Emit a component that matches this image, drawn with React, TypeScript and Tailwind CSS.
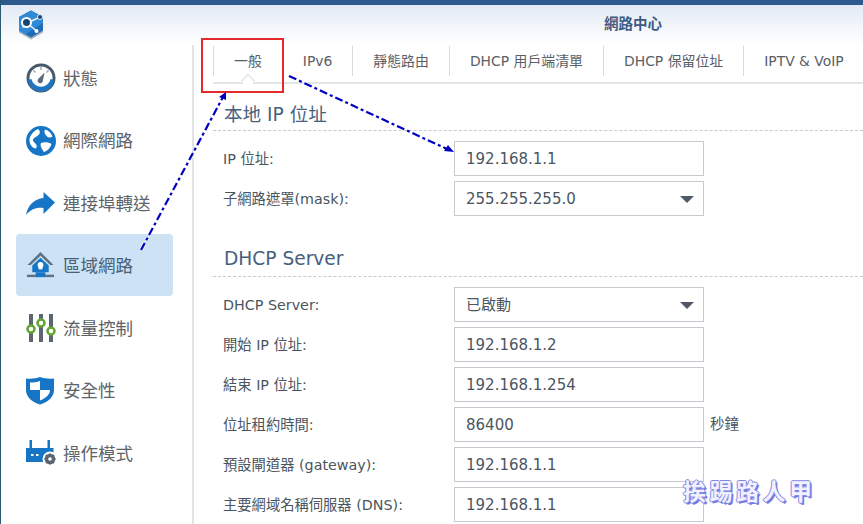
const font = "[font-family:'DejaVu_Sans','Noto_Sans_CJK_TC',sans-serif]";

function LogoIcon() {
  return (
    <svg width="30" height="30" viewBox="0 0 30 30">
      <path d="M15 2 27 8.500v14l-12 7-12-7v-14z" fill="#a9b2bb" />
      <path d="M15 0.500 27 7v13.500l-12 7-12-7V7z" fill="#1c6cb8" />
      <path d="M15 0.500 27 7v6L9 24.500l-6-4V7z" fill="#2f8ad6" />
      <circle cx="10.500" cy="12.500" r="4.500" fill="#16466f" stroke="#fff" strokeWidth="2" />
      <path d="M14.500 11.500 23 7.500M14 15.500l6.500 5.500M6.500 17.500l2-2" stroke="#e8f2fb" strokeWidth="1.500" />
      <circle cx="24" cy="7" r="2.500" fill="#16466f" stroke="#e8f2fb" />
      <circle cx="20.500" cy="21" r="2" fill="#fff" />
    </svg>
  );
}

function GaugeIcon() {
  return (
    <svg width="30" height="30" viewBox="0 0 30 30">
      <circle cx="15" cy="15" r="13" fill="#fff" stroke="#47596b" strokeWidth="3" />
      <path d="M1.800 17a13.300 13.300 0 0 0 26.400 0l-3.600-1a9.800 9.800 0 0 1-19.200 0z" fill="#1f75c0" />
      <path d="M18.500 9.500 16.800 18a2.600 2.600 0 1 1-4.400-2.200z" fill="#5d6b78" />
      <path d="M15 4v3M7.500 7.500l2 2M22.500 7.500l-2 2" stroke="#9aa5ae" strokeWidth="1.400" />
    </svg>
  );
}

function GlobeIcon() {
  return (
    <svg width="30" height="30" viewBox="0 0 30 30">
      <circle cx="15" cy="15" r="15" fill="#1675c4" />
      <path d="M12 3c2 1.500 2.500 3.500 1 5.500-2 2.500-5 2.500-6 5-.5 2 2.500 3.500 3.500 5.500.5 2 0 3.500-1.500 3.500C5 21 3 17 3.500 12.500 5 8 8 4.500 12 3z" fill="#fff" />
      <path d="M19 3.500c3 .5 6 3 7.500 7-1.500 1-4 1.500-5.500 0-1.500-1.500-3.500-4.500-2-7z" fill="#fff" />
      <path d="M15 17c3-1.500 8-1 10.500 1-1 3.500-4 7-7.500 8-1.500-2-4.500-6.500-3-9z" fill="#fff" />
    </svg>
  );
}

function ForwardIcon() {
  return (
    <svg width="29" height="23" viewBox="0 0 29 23">
      <path d="M17.500 0 29 10.500 17.500 22v-6C10 15 5 17.500 0 23 2 13 8 7 17.500 6z" fill="#1675c4" />
    </svg>
  );
}

function HouseIcon() {
  return (
    <svg width="29" height="29" viewBox="0 0 30 30">
      <path d="M15 1 1.500 14.500h3.500L15 5l10 9.500h3.500z" fill="#5d7286" />
      <path d="M15 7 6.500 15v7h17v-7z" fill="#1675c4" />
      <circle cx="15" cy="14.500" r="3" fill="#fff" />
      <rect x="13" y="15" width="4" height="4" fill="#fff" />
      <rect x="1" y="24.500" width="28" height="2.500" fill="#5d7286" />
      <rect x="10" y="22" width="10" height="5" fill="#1675c4" />
    </svg>
  );
}

function SlidersIcon() {
  return (
    <svg width="30" height="28" viewBox="0 0 30 28">
      <path d="M5 0v28M15 0v28M25 0v28" stroke="#5c6670" strokeWidth="4" />
      <circle cx="5" cy="15" r="3.500" fill="#fff" stroke="#5fa52e" strokeWidth="2.500" />
      <circle cx="15" cy="9" r="3.500" fill="#fff" stroke="#5fa52e" strokeWidth="2.500" />
      <circle cx="25" cy="17" r="3.500" fill="#fff" stroke="#5fa52e" strokeWidth="2.500" />
    </svg>
  );
}

function ShieldIcon() {
  return (
    <svg width="28" height="28" viewBox="0 0 28 28">
      <path d="M14 0c4 1.500 9 2 14 1.500V13c0 7-6 12-14 14.500C6 25 0 20 0 13V1.500C5 2 10 1.500 14 0z" fill="#1675c4" />
      <path d="M14 4c-3 1-6 1.500-10 1.500V13h10zM14 13v10.500c5-2 10-5.500 10-10.500z" fill="#fff" />
    </svg>
  );
}

function RouterIcon() {
  return (
    <svg width="31" height="26" viewBox="0 0 31 26">
      <path d="M0 8h27.500v14H0z" fill="#1675c4" />
      <path d="M3.500 0h2.500v10H3.500zM21.500 0H24v10h-2.500z" fill="#1675c4" />
      <path d="M5 14h2.500v2H5zM10 14h2.500v2H10z" fill="#fff" />
      <circle cx="24" cy="19" r="7.500" fill="#fff" />
      <circle cx="24" cy="19" r="3.800" fill="none" stroke="#5b6670" strokeWidth="3" />
      <path d="M24 13.500v11M18.500 19h11M20 15l8 8M28 15l-8 8" stroke="#5b6670" strokeWidth="2" />
      <circle cx="24" cy="19" r="1.800" fill="#fff" />
    </svg>
  );
}

const navItems = [
  { label: "狀態", icon: <GaugeIcon /> },
  { label: "網際網路", icon: <GlobeIcon /> },
  { label: "連接埠轉送", icon: <ForwardIcon /> },
  { label: "區域網路", icon: <HouseIcon />, active: true },
  { label: "流量控制", icon: <SlidersIcon /> },
  { label: "安全性", icon: <ShieldIcon /> },
  { label: "操作模式", icon: <RouterIcon /> },
];

const tabs = ["一般", "IPv6", "靜態路由", "DHCP 用戶端清單", "DHCP 保留位址", "IPTV & VoIP"];

function Row({ label, value, select, unit }: { label: string; value: string; select?: boolean; unit?: string }) {
  return (
    <div className="flex h-[35px] items-center">
      <span className="w-[241px] shrink-0 pt-[2px] pl-[10px] text-[14.300px] text-[#4a5560]">{label}</span>
      <div className="flex h-[35px] w-[250px] shrink-0 items-center justify-between border border-[#c6c9cd] pt-[2px] pr-[9px] pl-[11px] text-[15px] text-[#4a5560]">
        {value}
        {select && <span className="h-0 w-0 border-x-[7px] border-t-[7px] border-x-transparent border-t-[#4f5a66]" />}
      </div>
      {unit && <span className="ml-[6px] text-[14.500px] text-[#4a5560]">{unit}</span>}
    </div>
  );
}

function SectionTitle({ children, className }: { children: string; className: string }) {
  return (
    <h2 className={`flex items-center border-b border-dashed border-[#c8cbce] pl-[11px] text-[18.600px] font-normal text-[#47617c] ${className}`}>
      {children}
    </h2>
  );
}

export default function App() {
  return (
    <div className={`relative flex h-[524px] w-[863px] flex-col overflow-hidden border-l border-[#2b5a70] bg-white ${font}`}>
      <div className="h-[5px] shrink-0 bg-[#2c5a8e]" />
      <header className="flex h-[40px] shrink-0 items-center bg-gradient-to-b from-[#e3eaf4] to-white pl-[15px]">
        <LogoIcon />
        <span className="ml-[558px] text-[14.500px] font-bold text-[#3c5a84]">網路中心</span>
      </header>
      <div className="flex min-h-0 flex-1">
        <nav className="flex w-[191px] shrink-0 flex-col pt-[1px] pl-[15px]">
          {navItems.map((item) => (
            <div
              key={item.label}
              className={`flex h-[62.500px] w-[157px] shrink-0 items-center rounded-[4px] ${item.active ? "bg-[#cde3f5]" : ""}`}
            >
              <span className="flex w-[47px] shrink-0 pt-[2px] pl-[10px]">{item.icon}</span>
              <span className={`whitespace-nowrap pt-[3px] text-[17.500px] ${item.active ? "text-[#4a6078]" : "text-[#5d6368]"}`}>
                {item.label}
              </span>
            </div>
          ))}
        </nav>
        <main className="min-w-0 flex-1 border-l-2 border-[#e2e3e5] pt-[1px]">
          <div className="relative ml-[19px] flex h-[38px] border-b-2 border-[#e4e5e6] pb-[7px]">
            {tabs.map((tab) => (
              <div
                key={tab}
                className="flex h-[30px] shrink-0 items-center whitespace-nowrap border-l border-[#d9dadc] px-5 text-[13.900px] text-[#5a6066]"
              >
                {tab}
              </div>
            ))}
            <span className="absolute top-[30px] left-[30px] h-[10px] w-[10px] rotate-45 border-t border-l border-[#dcdddf] bg-white" />
          </div>
          <div className="mt-[16px] flex flex-col pl-[19px]">
            <SectionTitle className="h-[31px]">本地 IP 位址</SectionTitle>
            <div className="mt-[10px] flex flex-col gap-[5px]">
              <Row label="IP 位址:" value="192.168.1.1" />
              <Row label="子網路遮罩(mask):" value="255.255.255.0" select />
            </div>
            <SectionTitle className="mt-[27px] h-[34px] pb-[1px]">DHCP Server</SectionTitle>
            <div className="mt-[10px] flex flex-col gap-[5px]">
              <Row label="DHCP Server:" value="已啟動" select />
              <Row label="開始 IP 位址:" value="192.168.1.2" />
              <Row label="結束 IP 位址:" value="192.168.1.254" />
              <Row label="位址租約時間:" value="86400" unit="秒鐘" />
              <Row label="預設閘道器 (gateway):" value="192.168.1.1" />
              <Row label="主要網域名稱伺服器 (DNS):" value="192.168.1.1" />
            </div>
          </div>
        </main>
      </div>

      {/* annotations drawn over the screenshot */}
      <div className="absolute top-[38px] left-[200px] h-[55px] w-[83px] border-2 border-[#e12a2c]" />
      <svg className="absolute top-0 left-[-1px]" width="863" height="524" viewBox="0 0 863 524">
        <path d="M141 250 223 97" fill="none" stroke="#fff" strokeWidth="3.500" strokeDasharray="8 3 3 3" opacity="0.8" />
        <path d="M141 250 223 97" fill="none" stroke="#0000c0" strokeWidth="2.200" strokeDasharray="8 3 3 3" />
        <path d="M226 92 226 100 219 97z" fill="#0000c0" />
        <path d="M289 76 449 150" fill="none" stroke="#0000c0" strokeWidth="2.200" strokeDasharray="8 3 3 3" />
        <path d="M454 152 444 151 448 145z" fill="#0000c0" />
      </svg>
      <div className="absolute top-[475px] left-[682px] whitespace-nowrap text-[23px] font-bold tracking-[3.500px] text-[#f1f1ff] [text-shadow:1px_0_0_#8388e6,0_1px_0_#8388e6,-1px_0_0_#8388e6,0_-1px_0_#8388e6,2px_2px_0_#7378df]">
        挨踢路人甲
      </div>
    </div>
  );
}
